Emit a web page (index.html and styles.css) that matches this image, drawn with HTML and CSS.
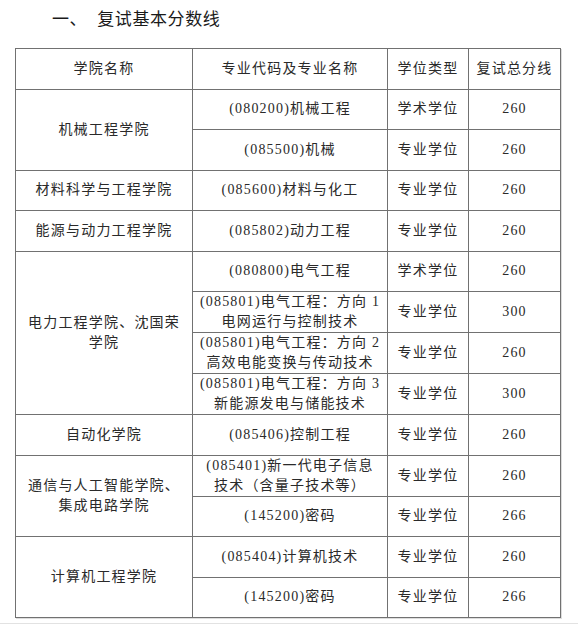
FILE: index.html
```html
<!DOCTYPE html>
<html lang="zh">
<head>
<meta charset="utf-8">
<title>复试基本分数线</title>
<link rel="stylesheet" href="styles.css">
</head>
<body>
<div class="page">
  <h2 class="title"><span class="num">一、</span>复试基本分数线</h2>
  <table class="score">
    <colgroup>
      <col class="c1"><col class="c2"><col class="c3"><col class="c4">
    </colgroup>
    <tr><td>学院名称</td><td>专业代码及专业名称</td><td>学位类型</td><td>复试总分线</td></tr>
    <tr><td rowspan="2">机械工程学院</td><td>(080200)机械工程</td><td>学术学位</td><td>260</td></tr>
    <tr><td>(085500)机械</td><td>专业学位</td><td>260</td></tr>
    <tr><td>材料科学与工程学院</td><td>(085600)材料与化工</td><td>专业学位</td><td>260</td></tr>
    <tr><td>能源与动力工程学院</td><td>(085802)动力工程</td><td>专业学位</td><td>260</td></tr>
    <tr><td rowspan="4">电力工程学院、沈国荣<br>学院</td><td>(080800)电气工程</td><td>学术学位</td><td>260</td></tr>
    <tr><td class="two">(085801)电气工程：方向 1<br>电网运行与控制技术</td><td>专业学位</td><td>300</td></tr>
    <tr><td class="two">(085801)电气工程：方向 2<br>高效电能变换与传动技术</td><td>专业学位</td><td>260</td></tr>
    <tr><td class="two">(085801)电气工程：方向 3<br>新能源发电与储能技术</td><td>专业学位</td><td>300</td></tr>
    <tr><td>自动化学院</td><td>(085406)控制工程</td><td>专业学位</td><td>260</td></tr>
    <tr><td rowspan="2">通信与人工智能学院、<br>集成电路学院</td><td class="two">(085401)新一代电子信息<br>技术（含量子技术等）</td><td>专业学位</td><td>260</td></tr>
    <tr><td>(145200)密码</td><td>专业学位</td><td>266</td></tr>
    <tr><td rowspan="2">计算机工程学院</td><td>(085404)计算机技术</td><td>专业学位</td><td>260</td></tr>
    <tr><td>(145200)密码</td><td>专业学位</td><td>266</td></tr>
  </table>
</div>
</body>
</html>
```
FILE: styles.css
```css
html, body {
  margin: 0;
  padding: 0;
  background: #ffffff;
}
.page {
  width: 578px;
  padding-top: 8px;
  padding-bottom: 5px;
  border-bottom: 1px solid #e2e2e2;
  font-family: "Liberation Serif", "Noto Sans CJK SC", serif;
  color: #2a2a2a;
}
.title {
  margin: 0 0 20px 52px;
  font-size: 17px;
  font-weight: 400;
  line-height: 20px;
  height: 20px;
  letter-spacing: 0.6px;
  font-family: "Noto Sans CJK SC", sans-serif;
  color: #1a1a1a;
}
.title .num {
  margin-right: 10px;
}
.score {
  margin-left: 15px;
  border-collapse: collapse;
  table-layout: fixed;
  width: 546px;
  box-shadow: 1px 1px 0 #dddddd;
}
.c1 { width: 177px; }
.c2 { width: 195px; }
.c3 { width: 81px; }
.c4 { width: 92px; }
.score tr {
  height: 40.5px;
}
.score td {
  border: 1px solid #717171;
  padding: 0;
  text-align: center;
  vertical-align: middle;
  font-size: 14px;
  line-height: 20px;
  letter-spacing: 1.2px;
  white-space: nowrap;
}
```
